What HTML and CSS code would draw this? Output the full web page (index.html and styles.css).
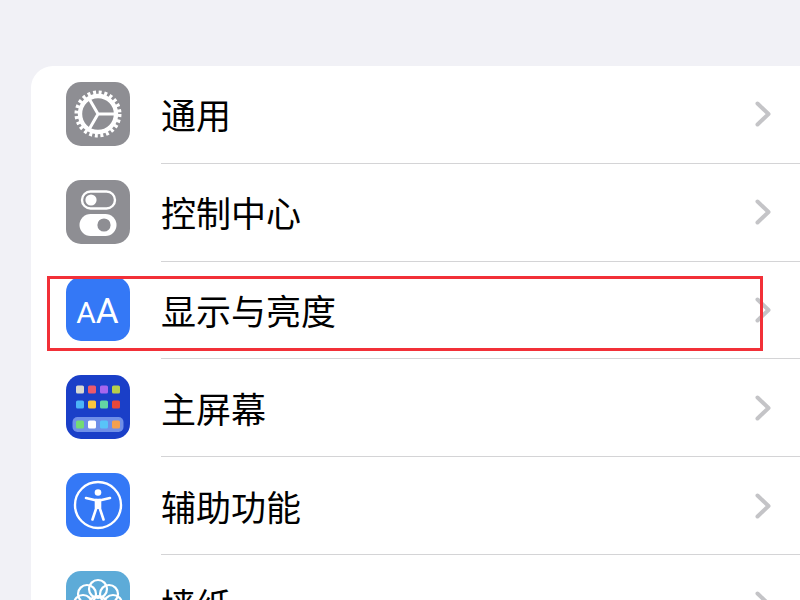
FILE: index.html
```html
<!DOCTYPE html>
<html lang="zh-CN">
<head>
  <meta charset="UTF-8">
  <meta name="viewport" content="width=device-width, initial-scale=1.0">
  <title>设置</title>
  <link rel="stylesheet" href="styles.css">
</head>
<body>
  <div class="settings-card">
    <div class="row">
      <div class="icon icon-gray">
        <svg viewBox="0 0 64 64">
          <circle cx="32" cy="32" r="21" fill="none" stroke="#fff" stroke-width="5" stroke-dasharray="2.9 2.6"/>
          <circle cx="32" cy="32" r="18" fill="none" stroke="#fff" stroke-width="4.4"/>
          <path d="M32 32H50M32 32L23 16.4M32 32L23 47.6" fill="none" stroke="#fff" stroke-width="3"/>
        </svg>
      </div>
      <div class="row-body">
        <span class="row-label">通用</span>
        <svg class="chevron" viewBox="0 0 16 26"><path d="M2.5 2.5L13.5 13L2.5 23.5"/></svg>
      </div>
    </div>
    <div class="row">
      <div class="icon icon-gray">
        <svg viewBox="0 0 64 64">
          <rect x="16" y="11.5" width="33" height="17" rx="8.5" fill="none" stroke="#fff" stroke-width="2.4"/>
          <circle cx="25" cy="20" r="5.6" fill="#fff"/>
          <rect x="13.5" y="34" width="37" height="22" rx="11" fill="#fff"/>
          <circle cx="38" cy="45" r="6.6" fill="#8e8e93"/>
        </svg>
      </div>
      <div class="row-body">
        <span class="row-label">控制中心</span>
        <svg class="chevron" viewBox="0 0 16 26"><path d="M2.5 2.5L13.5 13L2.5 23.5"/></svg>
      </div>
    </div>
    <div class="row">
      <div class="icon icon-blue icon-text">
        <span class="letter-small">A</span><span class="letter-big">A</span>
      </div>
      <div class="row-body">
        <span class="row-label">显示与亮度</span>
        <svg class="chevron" viewBox="0 0 16 26"><path d="M2.5 2.5L13.5 13L2.5 23.5"/></svg>
      </div>
    </div>
    <div class="row">
      <div class="icon icon-navy">
        <svg viewBox="0 0 64 64">
          <rect x="10" y="10.5" width="8" height="8" rx="1.6" fill="#d9d9d0"/>
          <rect x="22" y="10.5" width="8" height="8" rx="1.6" fill="#ea5a6c"/>
          <rect x="34" y="10.5" width="8" height="8" rx="1.6" fill="#a566ee"/>
          <rect x="46" y="10.5" width="8" height="8" rx="1.6" fill="#b5cf4a"/>
          <rect x="10" y="25.5" width="8" height="8" rx="1.6" fill="#4cb4f8"/>
          <rect x="22" y="25.5" width="8" height="8" rx="1.6" fill="#f9c63c"/>
          <rect x="34" y="25.5" width="8" height="8" rx="1.6" fill="#62d6a4"/>
          <rect x="46" y="25.5" width="8" height="8" rx="1.6" fill="#e8483a"/>
          <rect x="6.5" y="42" width="51" height="15" rx="5" fill="#6f8fe8"/>
          <rect x="10" y="45.5" width="8" height="8" rx="1.6" fill="#74dc74"/>
          <rect x="22" y="45.5" width="8" height="8" rx="1.6" fill="#fff"/>
          <rect x="34" y="45.5" width="8" height="8" rx="1.6" fill="#58c4f8"/>
          <rect x="46" y="45.5" width="8" height="8" rx="1.6" fill="#f4a04e"/>
        </svg>
      </div>
      <div class="row-body">
        <span class="row-label">主屏幕</span>
        <svg class="chevron" viewBox="0 0 16 26"><path d="M2.5 2.5L13.5 13L2.5 23.5"/></svg>
      </div>
    </div>
    <div class="row">
      <div class="icon icon-blue">
        <svg viewBox="0 0 64 64">
          <circle cx="32" cy="32" r="23" fill="none" stroke="#fff" stroke-width="2.4"/>
          <circle cx="32" cy="19.5" r="3.3" fill="#fff"/>
          <path d="M20 25L28.5 27H35.5L44 25" fill="none" stroke="#fff" stroke-width="2.6" stroke-linecap="round" stroke-linejoin="round"/>
          <path d="M30 27V36L26.5 46.5M34 27V36L37.5 46.5" fill="none" stroke="#fff" stroke-width="2.6" stroke-linecap="round"/>
          <rect x="30" y="27" width="4" height="9" fill="#fff"/>
        </svg>
      </div>
      <div class="row-body">
        <span class="row-label">辅助功能</span>
        <svg class="chevron" viewBox="0 0 16 26"><path d="M2.5 2.5L13.5 13L2.5 23.5"/></svg>
      </div>
    </div>
    <div class="row">
      <div class="icon icon-teal">
        <svg viewBox="0 0 64 64">
          <g fill="none" stroke="#fff" stroke-width="2.2">
            <circle cx="32" cy="18" r="9"/>
            <circle cx="21" cy="23" r="9"/>
            <circle cx="43" cy="23" r="9"/>
            <circle cx="17" cy="33" r="9"/>
            <circle cx="47" cy="33" r="9"/>
            <circle cx="32" cy="34" r="9"/>
          </g>
        </svg>
      </div>
      <div class="row-body">
        <span class="row-label">墙纸</span>
        <svg class="chevron" viewBox="0 0 16 26"><path d="M2.5 2.5L13.5 13L2.5 23.5"/></svg>
      </div>
    </div>
  </div>
  <div class="highlight-box"></div>
</body>
</html>
```

FILE: styles.css
```css
html, body {
  height: 100%;
}
body {
  margin: 0;
  padding: 66px 0 0 31px;
  box-sizing: border-box;
  background-color: #f1f1f6;
  font-family: "Noto Sans CJK SC", "Liberation Sans", sans-serif;
  color: #000;
  overflow: hidden;
}
.settings-card {
  width: 800px;
  background-color: #fff;
  border-radius: 22px;
}
.row {
  display: flex;
  align-items: center;
  height: 97.8px;
  padding-left: 34.5px;
  gap: 31.5px;
}
.icon {
  flex: none;
  width: 64px;
  height: 64px;
  margin-top: -2px;
  border-radius: 15px;
  overflow: hidden;
}
.icon svg {
  display: block;
  width: 64px;
  height: 64px;
}
.icon-gray {
  background-color: #8e8e93;
}
.icon-blue {
  background-color: #3478f6;
}
.icon-navy {
  background-color: #1a3fc8;
}
.icon-teal {
  background-color: #5dabd8;
}
.icon-text {
  display: flex;
  align-items: baseline;
  justify-content: center;
  font-family: Roboto, "Liberation Sans", sans-serif;
  line-height: 70px;
  color: #fff;
}
.letter-small {
  font-size: 30px;
}
.letter-big {
  font-size: 35px;
}
.row-body {
  flex: 1;
  align-self: stretch;
  display: flex;
  align-items: center;
  justify-content: space-between;
  padding-right: 60px;
  border-bottom: 1px solid #d4d4d6;
}
.row:last-child .row-body {
  border-bottom: none;
}
.row-label {
  font-size: 35px;
  line-height: 1;
  margin-top: -1px;
}
.chevron {
  width: 16px;
  height: 26px;
  fill: none;
  stroke: #c4c4c7;
  stroke-width: 4;
  stroke-linecap: round;
  stroke-linejoin: round;
}
.highlight-box {
  position: absolute;
  left: 47px;
  top: 276px;
  width: 710px;
  height: 69px;
  border: 3px solid #f23038;
}
```
